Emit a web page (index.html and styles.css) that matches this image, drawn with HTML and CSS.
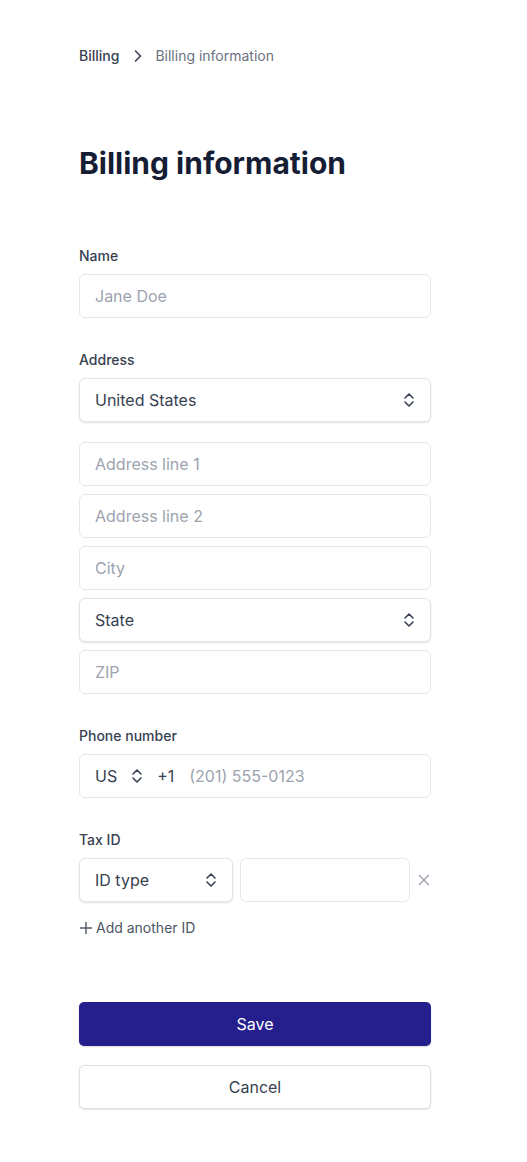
FILE: index.html
```html
<!DOCTYPE html>
<html>
<head>
<meta charset="utf-8">
<link rel="stylesheet" href="styles.css">
</head>
<body>
<main class="page">
  <nav class="crumbs">
    <span class="crumb-root">Billing</span>
    <svg class="crumb-sep" width="20" height="20" viewBox="0 0 20 20" fill="none"><path d="M7.5 5l5 5-5 5" stroke="#374151" stroke-width="1.6" stroke-linecap="round" stroke-linejoin="round"/></svg>
    <span class="crumb-cur">Billing information</span>
  </nav>

  <h1 class="title">Billing information</h1>

  <section class="field">
    <label class="label">Name</label>
    <div class="input"><span class="ph">Jane Doe</span></div>
  </section>

  <section class="field">
    <label class="label">Address</label>
    <div class="select"><span class="val">United States</span>
      <svg class="updown" width="14" height="18" viewBox="0 0 14 18" fill="none"><path d="M3 7l4-4 4 4M3 11l4 4 4-4" stroke="#374151" stroke-width="1.6" stroke-linecap="round" stroke-linejoin="round"/></svg>
    </div>
    <div class="stack">
      <div class="input"><span class="ph">Address line 1</span></div>
      <div class="input"><span class="ph">Address line 2</span></div>
      <div class="input"><span class="ph">City</span></div>
      <div class="select"><span class="val">State</span>
        <svg class="updown" width="14" height="18" viewBox="0 0 14 18" fill="none"><path d="M3 7l4-4 4 4M3 11l4 4 4-4" stroke="#374151" stroke-width="1.6" stroke-linecap="round" stroke-linejoin="round"/></svg>
      </div>
      <div class="input"><span class="ph">ZIP</span></div>
    </div>
  </section>

  <section class="field">
    <label class="label">Phone number</label>
    <div class="input phone">
      <span class="val">US</span>
      <svg class="updown sm" width="14" height="18" viewBox="0 0 14 18" fill="none"><path d="M3 7l4-4 4 4M3 11l4 4 4-4" stroke="#374151" stroke-width="1.6" stroke-linecap="round" stroke-linejoin="round"/></svg>
      <span class="val code">+1</span>
      <span class="ph">(201) 555-0123</span>
    </div>
  </section>

  <section class="field">
    <label class="label">Tax ID</label>
    <div class="tax-row">
      <div class="select idtype"><span class="val">ID type</span>
        <svg class="updown" width="14" height="18" viewBox="0 0 14 18" fill="none"><path d="M3 7l4-4 4 4M3 11l4 4 4-4" stroke="#374151" stroke-width="1.6" stroke-linecap="round" stroke-linejoin="round"/></svg>
      </div>
      <div class="input taxval"></div>
      <svg class="remove" width="14" height="14" viewBox="0 0 14 14" fill="none"><path d="M2.5 2.5l9 9M11.5 2.5l-9 9" stroke="#9ca3af" stroke-width="1.4" stroke-linecap="round"/></svg>
    </div>
    <div class="add-id">
      <svg width="14" height="14" viewBox="0 0 14 14" fill="none"><path d="M7 1.5v11M1.5 7h11" stroke="#4b5563" stroke-width="1.4" stroke-linecap="round"/></svg>
      <span>Add another ID</span>
    </div>
  </section>

  <div class="actions">
    <button class="btn primary">Save</button>
    <button class="btn secondary">Cancel</button>
  </div>
</main>
</body>
</html>
```
FILE: styles.css
```css
* { box-sizing: border-box; }
body {
  margin: 0;
  background: #ffffff;
  font-family: Inter, "Noto Sans", sans-serif;
  color: #111827;
}
.page {
  width: 352px;
  margin-left: 79px;
  padding-top: 46px;
  padding-bottom: 52px;
}
.crumbs {
  display: flex;
  align-items: center;
  height: 20px;
  font-size: 14px;
  line-height: 20px;
}
.crumb-root { font-weight: 500; color: #374151; }
.crumb-sep { margin: 0 7px 0 9px; }
.crumb-cur { color: #6b7280; }
.title {
  margin: 79px 0 0 0;
  font-size: 30px;
  line-height: 36px;
  font-weight: 700;
  color: #161e35;
}
.field {
  display: flex;
  flex-direction: column;
}
.title + .field { margin-top: 65px; }
.field + .field { margin-top: 32px; }
.label {
  font-size: 14px;
  line-height: 20px;
  font-weight: 500;
  color: #374151;
  margin-bottom: 8px;
}
.input, .select {
  height: 44px;
  border-radius: 6px;
  display: flex;
  align-items: center;
  padding: 0 15px;
  font-size: 16px;
  background: #fff;
}
.input { border: 1px solid #e5e7eb; }
.select {
  border: 1px solid #e2e4e9;
  box-shadow: 0 1px 2px rgba(0, 0, 0, 0.12);
  justify-content: space-between;
  padding-right: 14px;
}
.ph { color: #9ca3af; }
.val { color: #374151; }
.stack {
  margin-top: 20px;
  display: flex;
  flex-direction: column;
  gap: 8px;
}
.phone .updown { margin: 0 13px 0 13px; }
.phone .code { margin-right: 15px; }
.tax-row {
  display: flex;
  align-items: center;
}
.idtype { width: 155px; }
.taxval { width: 171px; margin-left: 7px; }
.remove { margin-left: 7px; }
.add-id {
  display: flex;
  align-items: center;
  margin-top: 16px;
  font-size: 14px;
  line-height: 20px;
  color: #4b5563;
  gap: 3px;
}
.actions {
  margin-top: 64px;
  display: flex;
  flex-direction: column;
  gap: 19px;
}
.btn {
  height: 44px;
  width: 100%;
  border-radius: 5px;
  font-family: Inter, "Noto Sans", sans-serif;
  font-size: 16px;
  font-weight: 400;
}
.primary {
  background: #251f8d;
  color: #fff;
  border: none;
  box-shadow: 0 1px 2px rgba(0, 0, 0, 0.15);
}
.secondary {
  background: #fff;
  color: #374151;
  border: 1px solid #dcdfe4;
  box-shadow: 0 1px 2px rgba(0, 0, 0, 0.1);
}
```
